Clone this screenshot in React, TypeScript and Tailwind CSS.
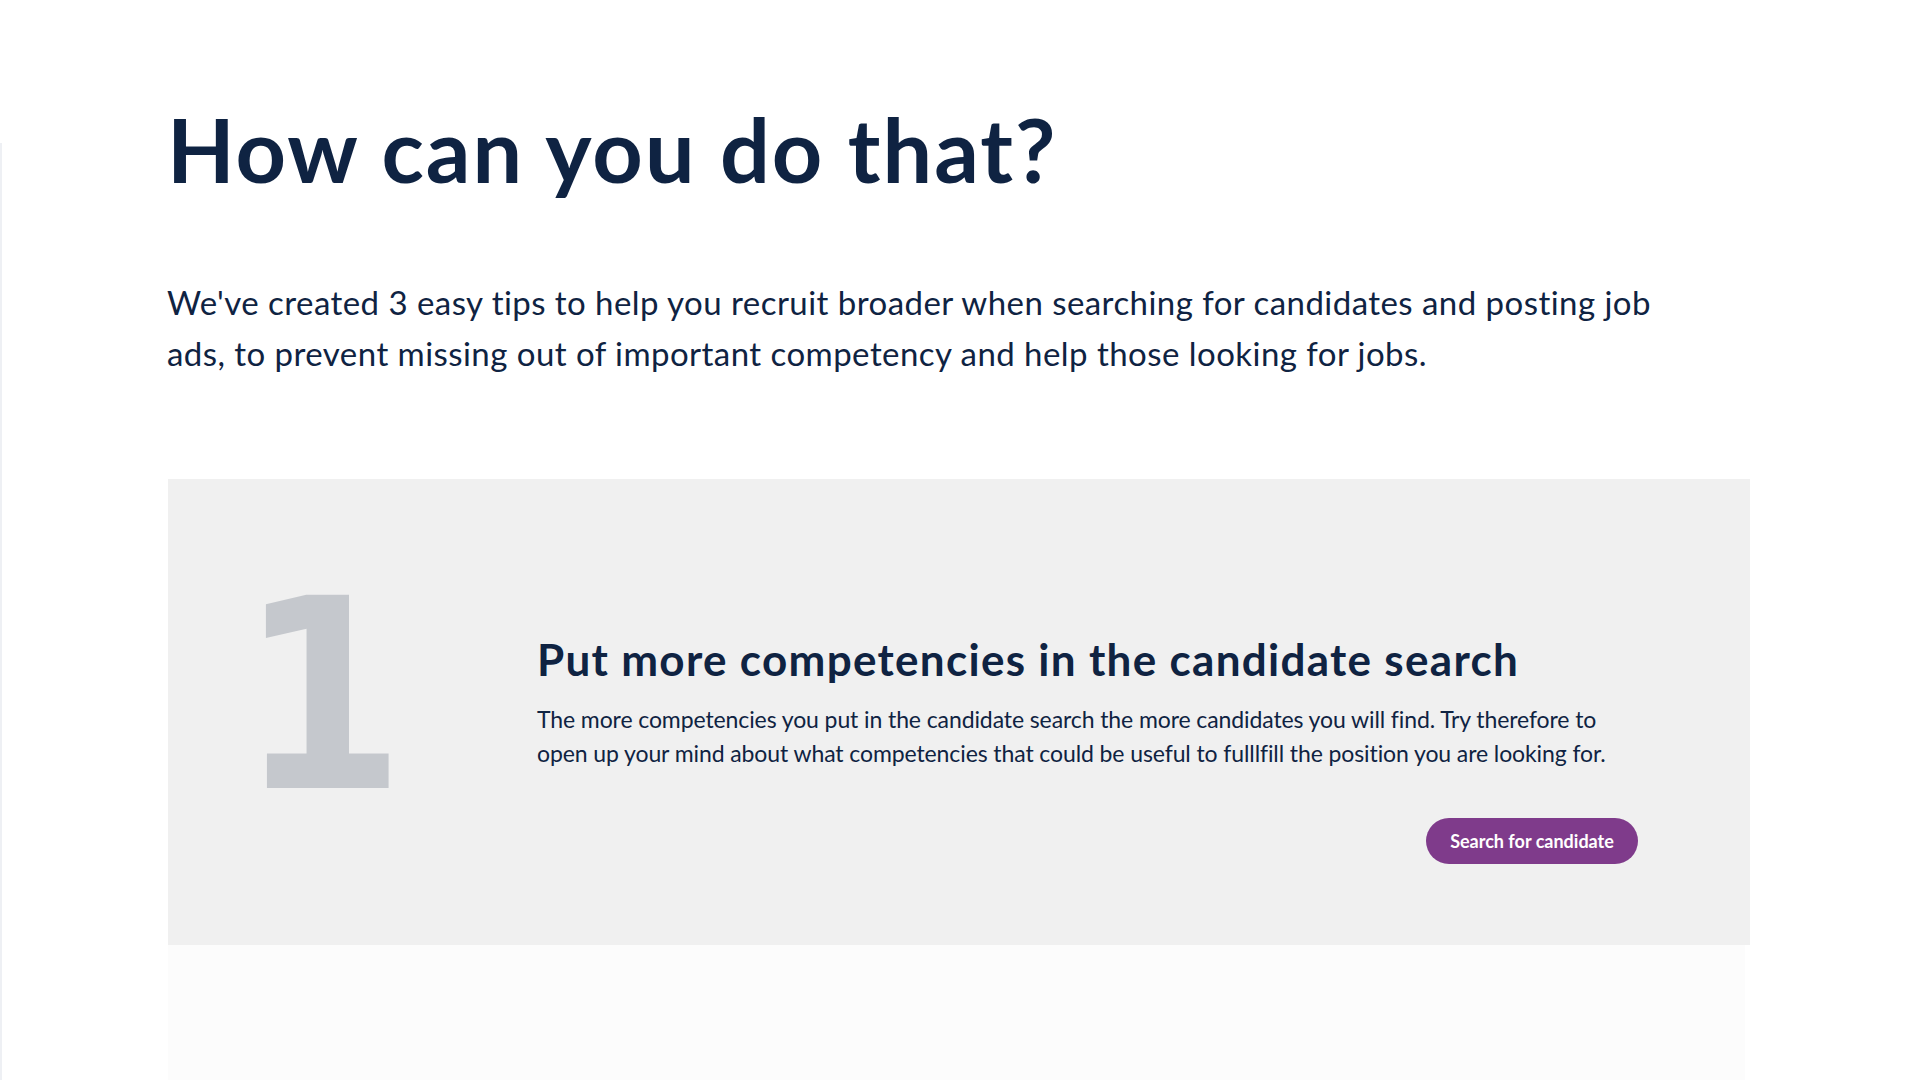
import React from 'react';

const tips = [
  {
    number: '1',
    title: 'Put more competencies in the candidate search',
    lines: [
      'The more competencies you put in the candidate search the more candidates you will find. Try therefore to',
      'open up your mind about what competencies that could be useful to fulllfill the position you are looking for.',
    ],
    action: 'Search for candidate',
  },
];

export default function App() {
  return (
    <div className="min-h-screen bg-white flex text-[#0f2342] font-['Lato',sans-serif]">
      {/* Left edge strip */}
      <div className="w-[2px] mt-[143px] bg-[#eef0f4] shrink-0" />

      <main className="flex-1 pl-[165px] pr-[162px] pt-[105px] pb-10">
        <h1 className="text-[88px] leading-none font-bold tracking-[2px]">How can you do that?</h1>

        <p className="mt-[84px] text-[33px] leading-[51px] tracking-[0.45px]">
          We've created 3 easy tips to help you recruit broader when searching for candidates and posting job
          <br />
          ads, to prevent missing out of important competency and help those looking for jobs.
        </p>

        <div className="mt-[100px] flex flex-col">
          {tips.map((tip) => (
            <section key={tip.number} className="ml-px bg-[#f0f0f0] flex pb-[81px]">
              <div className="w-[369px] shrink-0 pl-[71px] pt-[85px]">
                <span className="block text-[265px] leading-none font-bold text-[#c5c8cd] font-['DejaVu_Sans_Condensed','DejaVu_Sans',sans-serif]">
                  {tip.number}
                </span>
              </div>
              <div className="w-[1101px] pt-[155px] flex flex-col">
                <h2 className="text-[44px] leading-[50px] font-bold tracking-[1.3px]">{tip.title}</h2>
                <p className="mt-[18px] text-[23px] leading-[34px] tracking-[-0.1px] whitespace-nowrap">
                  {tip.lines[0]}
                  <br />
                  {tip.lines[1]}
                </p>
                <button className="mt-[48px] self-end h-[46px] w-[212px] rounded-full bg-[#7f3b8b] text-white text-[18px] font-bold">
                  {tip.action}
                </button>
              </div>
            </section>
          ))}
          {/* Next tip, still fading in */}
          <div className="ml-px mr-[5px] h-[400px] bg-[#fcfcfc]" />
        </div>
      </main>
    </div>
  );
}
